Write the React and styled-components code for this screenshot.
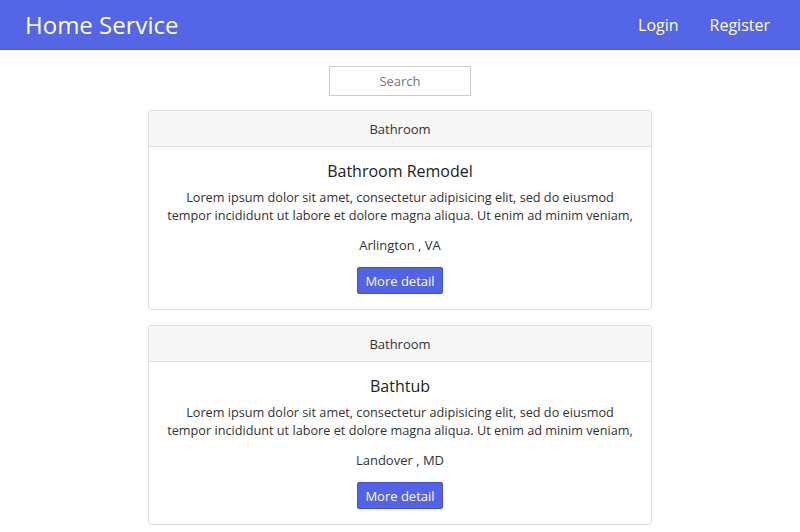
import React from "react";
import styled, { createGlobalStyle } from "styled-components";

const Global = createGlobalStyle`
  html, body { margin: 0; padding: 0; background: #fff; }
  body { font-family: "Open Sans", "DejaVu Sans", sans-serif; color: #212529; }
  * { box-sizing: border-box; }
`;

const Nav = styled.nav`
  height: 50px;
  background: #5465e6;
  border-bottom: 1px solid #4a5ae0;
  display: flex;
  align-items: center;
  justify-content: space-between;
  padding: 0 30px 0 25px;
`;

const Brand = styled.a`
  color: #fff;
  font-size: 24px;
  text-decoration: none;
`;

const NavLinks = styled.div`
  display: flex;
  gap: 31px;
`;

const NavLink = styled.a`
  color: #fff;
  font-size: 16px;
  text-decoration: none;
`;

const Main = styled.main`
  display: flex;
  flex-direction: column;
  align-items: center;
  padding-top: 16px;
`;

const SearchInput = styled.input`
  display: block;
  width: 142px;
  height: 30px;
  border: 1px solid #ccc;
  text-align: center;
  font-family: inherit;
  font-size: 13px;
  color: #555;
  outline: none;
  margin: 0 0 14px;
  &::placeholder { color: #777; }
`;

const List = styled.div`
  display: flex;
  flex-direction: column;
  gap: 15px;
  width: 504px;
`;

const Card = styled.div`
  border: 1px solid #dfdfdf;
  border-radius: 3px;
  overflow: hidden;
`;

const CardHeader = styled.div`
  height: 36px;
  background: #f7f7f7;
  border-bottom: 1px solid #e0e0e0;
  display: flex;
  align-items: center;
  justify-content: center;
  font-size: 13px;
  color: #333;
`;

const CardBody = styled.div`
  display: flex;
  flex-direction: column;
  align-items: center;
  padding: 13px 14px 15px;
  text-align: center;
`;

const Title = styled.h3`
  margin: 0 0 6px;
  font-size: 16px;
  font-weight: 400;
  line-height: 22px;
  color: #222;
`;

const Text = styled.p`
  margin: 0 0 12px;
  font-size: 12.7px;
  line-height: 18px;
  color: #333;
`;

const Location = styled.p`
  margin: 0 0 13px;
  font-size: 13px;
  line-height: 18px;
  color: #333;
`;

const Button = styled.button`
  height: 27px;
  padding: 0 7px;
  background: #5263e8;
  color: #fff;
  border: 1px solid #3e50e0;
  border-radius: 2px;
  font-family: inherit;
  font-size: 13px;
`;

const items = [
  { cat: "Bathroom", title: "Bathroom Remodel", loc: "Arlington , VA" },
  { cat: "Bathroom", title: "Bathtub", loc: "Landover , MD" },
];

export default function App() {
  return (
    <>
      <Global />
      <Nav>
        <Brand href="#">Home Service</Brand>
        <NavLinks>
          <NavLink href="#">Login</NavLink>
          <NavLink href="#">Register</NavLink>
        </NavLinks>
      </Nav>
      <Main>
        <SearchInput placeholder="Search" />
        <List>
          {items.map((it, i) => (
            <Card key={i}>
              <CardHeader>{it.cat}</CardHeader>
              <CardBody>
                <Title>{it.title}</Title>
                <Text>
                  Lorem ipsum dolor sit amet, consectetur adipisicing elit, sed do eiusmod
                  <br />
                  tempor incididunt ut labore et dolore magna aliqua. Ut enim ad minim veniam,
                </Text>
                <Location>{it.loc}</Location>
                <Button>More detail</Button>
              </CardBody>
            </Card>
          ))}
        </List>
      </Main>
    </>
  );
}
